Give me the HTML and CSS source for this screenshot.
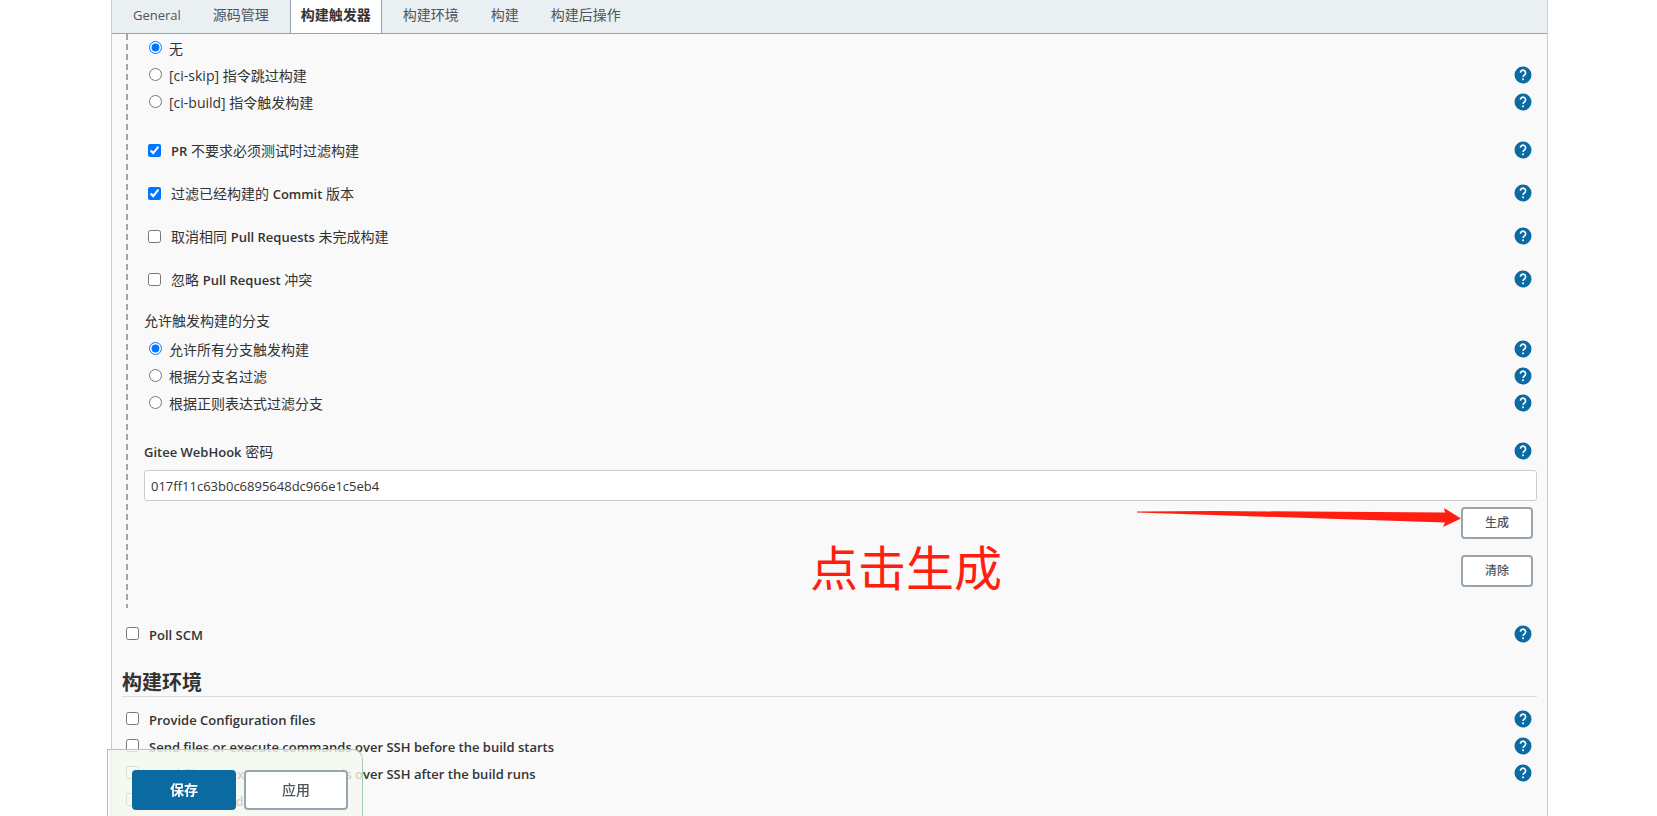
FILE: index.html
```html
<!DOCTYPE html>
<html lang="zh-CN">
<head>
<meta charset="utf-8">
<title>构建触发器</title>
<link rel="stylesheet" href="styles.css">
</head>
<body>
<svg class="defs" aria-hidden="true">
  <symbol id="help" viewBox="0 0 18 18">
    <circle cx="9" cy="9" r="8.5" fill="#0b6aa2"/>
    <path d="M6.4 6.7a2.6 2.6 0 1 1 4.2 2.1c-.9.7-1.5 1.1-1.5 2.3" fill="none" stroke="#fff" stroke-width="1.6"/>
    <rect x="8.2" y="12.4" width="1.7" height="1.8" fill="#fff"/>
  </symbol>
</svg>
<main class="panel">
  <nav class="tabs">
    <a class="tab latin-tab" href="#general">General</a>
    <a class="tab" href="#scm">源码管理</a>
    <a class="tab active" href="#triggers">构建触发器</a>
    <a class="tab" href="#env">构建环境</a>
    <a class="tab" href="#build">构建</a>
    <a class="tab" href="#post">构建后操作</a>
  </nav>
  <form class="config">
    <div class="nested">
      <div class="group">
        <div class="row radio"><label><input type="radio" name="skip" checked>无</label></div>
        <div class="row radio"><label><input type="radio" name="skip">[ci-skip] 指令跳过构建</label><button type="button" class="help" aria-label="帮助"><svg><use href="#help"/></svg></button></div>
        <div class="row radio"><label><input type="radio" name="skip">[ci-build] 指令触发构建</label><button type="button" class="help" aria-label="帮助"><svg><use href="#help"/></svg></button></div>
      </div>
      <div class="checks">
        <div class="row check"><label><input type="checkbox" checked><span><b>PR</b> 不要求必须测试时过滤构建</span></label><button type="button" class="help" aria-label="帮助"><svg><use href="#help"/></svg></button></div>
        <div class="row check"><label><input type="checkbox" checked><span>过滤已经构建的 <b>Commit</b> 版本</span></label><button type="button" class="help" aria-label="帮助"><svg><use href="#help"/></svg></button></div>
        <div class="row check"><label><input type="checkbox"><span>取消相同 <b>Pull Requests</b> 未完成构建</span></label><button type="button" class="help" aria-label="帮助"><svg><use href="#help"/></svg></button></div>
        <div class="row check"><label><input type="checkbox"><span>忽略 <b>Pull Request</b> 冲突</span></label><button type="button" class="help" aria-label="帮助"><svg><use href="#help"/></svg></button></div>
      </div>
      <div class="group">
        <div class="row title">允许触发构建的分支</div>
        <div class="row radio"><label><input type="radio" name="branch" checked>允许所有分支触发构建</label><button type="button" class="help" aria-label="帮助"><svg><use href="#help"/></svg></button></div>
        <div class="row radio"><label><input type="radio" name="branch">根据分支名过滤</label><button type="button" class="help" aria-label="帮助"><svg><use href="#help"/></svg></button></div>
        <div class="row radio"><label><input type="radio" name="branch">根据正则表达式过滤分支</label><button type="button" class="help" aria-label="帮助"><svg><use href="#help"/></svg></button></div>
      </div>
      <div class="row title"><label for="secret"><span><b>Gitee WebHook</b> 密码</span></label><button type="button" class="help" aria-label="帮助"><svg><use href="#help"/></svg></button></div>
      <input class="text" id="secret" type="text" value="017ff11c63b0c6895648dc966e1c5eb4">
      <div class="actions">
        <button type="button" class="btn small">生成</button>
        <button type="button" class="btn small">清除</button>
        <svg class="arrow" viewBox="0 0 326 22" aria-hidden="true"><path d="M1 5.500 78 5 309 6.500 308 2 325 12.500 307 21 309 16.500 1 6.500z" fill="#ff1e10"/></svg>
        <p class="note">点击生成</p>
      </div>
    </div>
    <div class="row outer poll"><label><input type="checkbox"><b>Poll SCM</b></label><button type="button" class="help" aria-label="帮助"><svg><use href="#help"/></svg></button></div>
    <h2 class="section" id="env">构建环境</h2>
    <div class="row outer"><label><input type="checkbox"><b>Provide Configuration files</b></label><button type="button" class="help" aria-label="帮助"><svg><use href="#help"/></svg></button></div>
    <div class="row outer"><label><input type="checkbox"><b>Send files or execute commands over SSH before the build starts</b></label><button type="button" class="help" aria-label="帮助"><svg><use href="#help"/></svg></button></div>
    <div class="row outer"><label><input type="checkbox"><b>Send files or execute commands over SSH after the build runs</b></label><button type="button" class="help" aria-label="帮助"><svg><use href="#help"/></svg></button></div>
    <div class="row outer"><label><input type="checkbox"><b>Abort the build if it's stuck</b></label></div>
  </form>
</main>
<div class="savebar">
  <button type="button" class="btn primary">保存</button>
  <button type="button" class="btn">应用</button>
</div>
</body>
</html>
```
FILE: styles.css
```css
* { box-sizing: border-box; }
html { height: 100%; overflow: hidden; }
body {
  height: 100%;
  margin: 0;
  overflow: hidden;
  background: #fff;
  color: #333;
  font: 14px/20px "Open Sans", "Noto Sans CJK SC", sans-serif;
}
b { font-size: 13px; font-weight: 600; }
.defs { position: absolute; width: 0; height: 0; }
.panel {
  min-height: 100%;
  margin: 0 109px 0 111px;
  border: 1px solid #ccc;
  border-width: 0 1px;
  background: #f9f9f9;
}
.tabs {
  display: flex;
  gap: 10px;
  height: 34px;
  padding: 0 10px;
  border-bottom: 1px solid #98a5af;
  background: #eaeff2;
}
.tab {
  padding: 5px 10px;
  border: 1px solid transparent;
  border-width: 0 1px;
  color: #4d545d;
  text-decoration: none;
}
.tab.latin-tab { font-size: 13px; }
.tab.active { border-color: #98a5af; background: #fff; color: #333; font-weight: 700; }
.config { padding: 0 10px; }
.nested {
  margin-left: 4px;
  padding: 1px 0 21px 18px;
  background: repeating-linear-gradient(#a5a5a5 0 6px, transparent 6px 10px) 0 0 / 2px 100% no-repeat;
}
.row { display: flex; align-items: center; justify-content: space-between; height: 27px; }
.row label { display: flex; align-items: center; }
.row input { width: 13px; height: 13px; margin: 0; }
.radio { padding-left: 5px; }
.row.radio input { margin: 0 7px 2px 0; }
.check { padding-left: 4px; }
.row.check input { margin-right: 10px; }
.row.outer input { margin: 0 10px 2px 0; }
.group { margin-bottom: 21px; }
.group .title { margin-bottom: 2px; }
.checks { display: grid; gap: 16px; margin-bottom: 14px; }
.help { width: 18px; height: 18px; margin: 0 5px 2px 0; padding: 0; border: 0; background: none; }
.help svg { display: block; width: 18px; height: 18px; }
.text {
  display: block;
  width: 100%;
  height: 31px;
  margin-top: 5px;
  padding: 0 6px;
  border: 1px solid #ccc;
  border-radius: 3px;
  background: #fff;
  color: #333;
  font: inherit;
  font-size: 13px;
}
.actions {
  position: relative;
  display: flex;
  flex-direction: column;
  align-items: flex-end;
  gap: 16px;
  padding: 6px 4px 0 0;
}
.btn {
  width: 104px;
  height: 40px;
  padding: 0;
  border: 2px solid #98a5af;
  border-radius: 4px;
  background: #fff;
  color: #4d545d;
  font: 500 14px/20px "Open Sans", "Noto Sans CJK SC", sans-serif;
}
.btn.small { width: 72px; height: 32px; font-size: 12px; }
.btn.primary { border-color: #0b6aa2; background: #0b6aa2; color: #fff; font-weight: 700; }
.arrow { position: absolute; top: 5px; right: 75px; width: 326px; height: 22px; }
.note {
  position: absolute;
  top: 35px;
  right: 535px;
  margin: 0;
  color: #ff1e10;
  font-size: 48px;
  line-height: 64px;
}
.outer { padding-left: 4px; }
.poll { margin-top: 13px; }
.section {
  margin: 22px 0 9px;
  border-bottom: 1px solid #ddd;
  font-size: 20px;
  line-height: 26px;
}
.savebar {
  position: fixed;
  bottom: 0;
  left: 107px;
  display: flex;
  gap: 8px;
  padding: 20px 14px 6px 24px;
  border: 1px solid #a8cdb7;
  border-bottom: 0;
  border-radius: 0 10px 0 0;
  background: rgba(245, 249, 239, 0.8);
}
```
